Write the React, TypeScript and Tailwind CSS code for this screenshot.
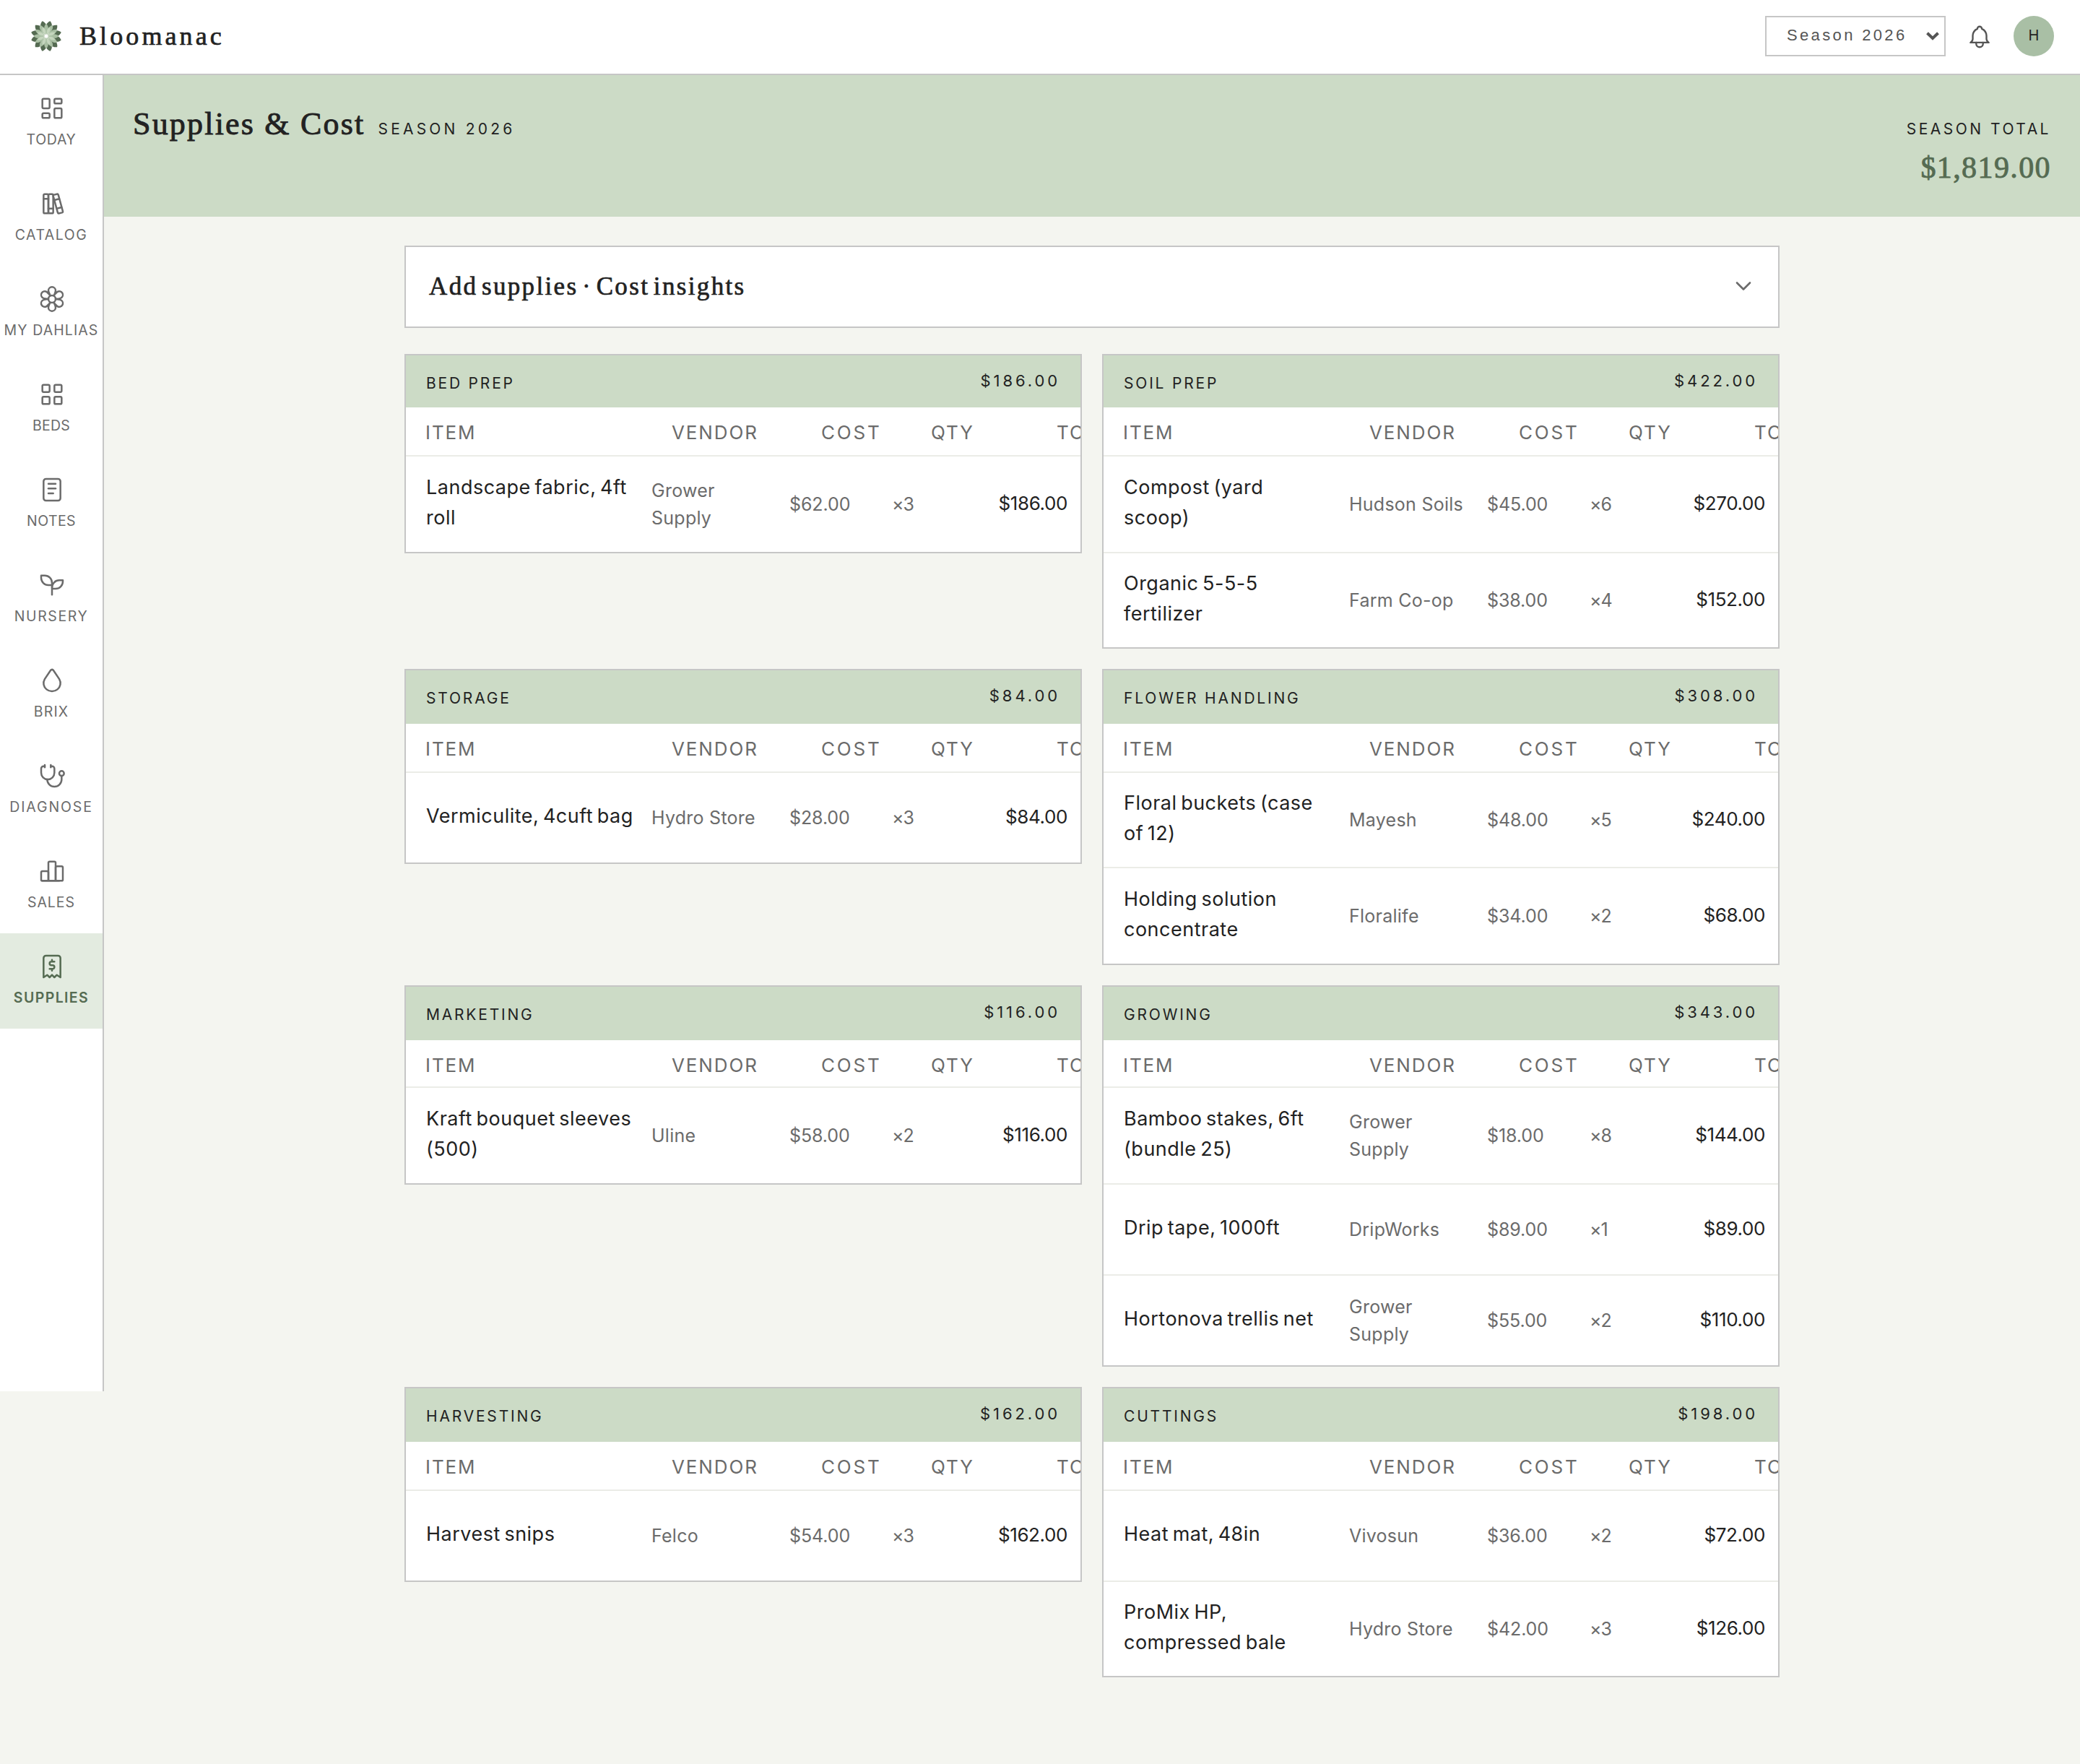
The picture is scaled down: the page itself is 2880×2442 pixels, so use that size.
import {
  TbBell,
  TbBooks,
  TbChartBar,
  TbChevronDown,
  TbDroplet,
  TbFlower,
  TbLayoutDashboard,
  TbLayoutGrid,
  TbNotes,
  TbReceipt2,
  TbSeeding,
  TbStethoscope,
} from 'react-icons/tb'

const nav = [
  { label: 'TODAY', icon: TbLayoutDashboard, spacing: 'tracking-[0.7px]' },
  { label: 'CATALOG', icon: TbBooks, spacing: 'tracking-[1.5px]' },
  { label: 'MY DAHLIAS', icon: TbFlower, spacing: 'tracking-[1.1px]' },
  { label: 'BEDS', icon: TbLayoutGrid, spacing: 'tracking-[0.2px]' },
  { label: 'NOTES', icon: TbNotes, spacing: 'tracking-[0.4px]' },
  { label: 'NURSERY', icon: TbSeeding, spacing: 'tracking-[1.6px]' },
  { label: 'BRIX', icon: TbDroplet, spacing: 'tracking-[1.2px]' },
  { label: 'DIAGNOSE', icon: TbStethoscope, spacing: 'tracking-[1.9px]' },
  { label: 'SALES', icon: TbChartBar, spacing: 'tracking-[1px]' },
  { label: 'SUPPLIES', icon: TbReceipt2, spacing: 'tracking-[1.4px]', active: true },
]

type Item = { name: string; vendor: string; cost: string; qty: string; total: string; h: string }
type Group = { title: string; total: string; head: string; cols: string; items: Item[] }

const groups: Group[] = [
  {
    title: 'BED PREP', total: '$186.00', head: 'h-[72px]', cols: 'h-[68px]',
    items: [
      { name: 'Landscape fabric, 4ft\nroll', vendor: 'Grower\nSupply', cost: '$62.00', qty: '×3', total: '$186.00', h: 'h-[132px]' },
    ],
  },
  {
    title: 'SOIL PREP', total: '$422.00', head: 'h-[72px]', cols: 'h-[68px]',
    items: [
      { name: 'Compost (yard\nscoop)', vendor: 'Hudson Soils', cost: '$45.00', qty: '×6', total: '$270.00', h: 'h-[134px]' },
      { name: 'Organic 5-5-5\nfertilizer', vendor: 'Farm Co-op', cost: '$38.00', qty: '×4', total: '$152.00', h: 'h-[130px]' },
    ],
  },
  {
    title: 'STORAGE', total: '$84.00', head: 'h-[74px]', cols: 'h-[68px]',
    items: [
      { name: 'Vermiculite, 4cuft bag', vendor: 'Hydro Store', cost: '$28.00', qty: '×3', total: '$84.00', h: 'h-[124px]' },
    ],
  },
  {
    title: 'FLOWER HANDLING', total: '$308.00', head: 'h-[74px]', cols: 'h-[68px]',
    items: [
      { name: 'Floral buckets (case\nof 12)', vendor: 'Mayesh', cost: '$48.00', qty: '×5', total: '$240.00', h: 'h-[132px]' },
      { name: 'Holding solution\nconcentrate', vendor: 'Floralife', cost: '$34.00', qty: '×2', total: '$68.00', h: 'h-[132px]' },
    ],
  },
  {
    title: 'MARKETING', total: '$116.00', head: 'h-[74px]', cols: 'h-[66px]',
    items: [
      { name: 'Kraft bouquet sleeves\n(500)', vendor: 'Uline', cost: '$58.00', qty: '×2', total: '$116.00', h: 'h-[132px]' },
    ],
  },
  {
    title: 'GROWING', total: '$343.00', head: 'h-[74px]', cols: 'h-[66px]',
    items: [
      { name: 'Bamboo stakes, 6ft\n(bundle 25)', vendor: 'Grower\nSupply', cost: '$18.00', qty: '×8', total: '$144.00', h: 'h-[134px]' },
      { name: 'Drip tape, 1000ft', vendor: 'DripWorks', cost: '$89.00', qty: '×1', total: '$89.00', h: 'h-[126px]' },
      { name: 'Hortonova trellis net', vendor: 'Grower\nSupply', cost: '$55.00', qty: '×2', total: '$110.00', h: 'h-[124px]' },
    ],
  },
  {
    title: 'HARVESTING', total: '$162.00', head: 'h-[74px]', cols: 'h-[68px]',
    items: [
      { name: 'Harvest snips', vendor: 'Felco', cost: '$54.00', qty: '×3', total: '$162.00', h: 'h-[124px]' },
    ],
  },
  {
    title: 'CUTTINGS', total: '$198.00', head: 'h-[74px]', cols: 'h-[68px]',
    items: [
      { name: 'Heat mat, 48in', vendor: 'Vivosun', cost: '$36.00', qty: '×2', total: '$72.00', h: 'h-[126px]' },
      { name: 'ProMix HP,\ncompressed bale', vendor: 'Hydro Store', cost: '$42.00', qty: '×3', total: '$126.00', h: 'h-[130px]' },
    ],
  },
]

function Logo() {
  return (
    <svg viewBox="-21 -21 42 42" className="h-[42px] w-[42px]">
      {[...Array(12)].map((_, i) => (
        <path key={i} d="M0 -8L-3.8 -16.2C-3.2 -18.4 -1.6 -20.4 0 -21.4C1.6 -20.4 3.2 -18.4 3.8 -16.2Z" fill="#556b52" transform={`rotate(${15 + i * 30})`} />
      ))}
      {[...Array(12)].map((_, i) => (
        <path key={i} d="M0 -3C-3.2 -8 -4.2 -13 0 -17.6C4.2 -13 3.2 -8 0 -3Z" fill="#a9bfa3" transform={`rotate(${i * 30})`} />
      ))}
      {[...Array(8)].map((_, i) => (
        <path key={i} d="M0 -2.5C-3 -6 -3.2 -10 0 -13.6C3.2 -10 3 -6 0 -2.5Z" fill="#c5d6be" stroke="#a9bfa3" strokeWidth="0.5" transform={`rotate(${22.5 + i * 45})`} />
      ))}
      <circle r="3" fill="#fff" stroke="#a9bfa3" strokeWidth="0.6" />
    </svg>
  )
}

function TopBar() {
  return (
    <header className="flex h-[104px] items-center justify-between border-b-2 border-[#c6c6c6] bg-white pr-9 pb-[2px] pl-[43px]">
      <div className="flex items-center gap-[25px]">
        <Logo />
        <span className="font-['Liberation_Serif',serif] text-[36px] leading-[44px] tracking-[4.1px] text-[#222] [-webkit-text-stroke:0.7px_#222]">Bloomanac</span>
      </div>
      <div className="flex items-center gap-7">
        <div className="flex h-14 w-[250px] items-center justify-between border-2 border-[#c6c6c6] pr-[7px] pl-7">
          <span className="pb-[3px] font-['Liberation_Sans',sans-serif] text-[22px] leading-[26px] tracking-[3.35px] text-[#555]">Season 2026</span>
          <svg viewBox="0 0 18 12" className="h-3 w-[18px]" fill="none" stroke="#555" strokeWidth="4">
            <path d="M1.5 1.8L9 9L16.5 1.8" />
          </svg>
        </div>
        <TbBell size={38} strokeWidth={1.5} className="mt-[2px] text-[#555]" />
        <div className="flex h-14 w-14 items-center justify-center rounded-full bg-[#a9bfa5] pb-[3px] text-[20px] text-[#222]">H</div>
      </div>
    </header>
  )
}

function Sidebar() {
  return (
    <nav className="h-[1822px] w-36 shrink-0 border-r-2 border-[#c6c6c6] bg-white">
      {nav.map(({ label, icon: Icon, spacing, active }) => (
        <div
          key={label}
          className={`flex h-[132px] flex-col items-center gap-[11px] pt-[26px] ${active ? 'bg-[#e3ebe0] font-semibold text-[#556b52]' : 'text-[#6b6b6b]'}`}
        >
          <Icon size={40} strokeWidth={1.5} className="ml-[2px]" />
          <span className={`text-[19.5px] leading-6 whitespace-nowrap ${spacing}`}>{label}</span>
        </div>
      ))}
    </nav>
  )
}

function GroupCard({ group }: { group: Group }) {
  return (
    <section className="overflow-hidden border-2 border-[#c6c6c6] bg-white">
      <div className={`flex items-start justify-between bg-[#ccdbc6] pr-7 pl-7 leading-[26px] text-[#222] ${group.head}`}>
        <h3 className="pt-[26px] text-[21px] tracking-[2.8px]">{group.title}</h3>
        <span className="pt-[22px] text-[22px] tracking-[3.9px]">{group.total}</span>
      </div>
      <div className={`grid grid-cols-[341px_207px_152px_174px_100px] items-start border-b-2 border-[#ebece7] pt-[22px] pl-[27px] text-[26px] leading-[26px] tracking-[1.9px] text-[#6b6b6b] ${group.cols}`}>
        <span>ITEM</span>
        <span>VENDOR</span>
        <span className="tracking-[2.8px]">COST</span>
        <span>QTY</span>
        <span>TOTAL</span>
      </div>
      {group.items.map((item) => (
        <div
          key={item.name}
          className={`grid grid-cols-[312px_191px_142px_60px_183px] items-center border-b-2 border-[#ebece7] pl-7 text-[25px] leading-[38px] whitespace-pre-line text-[#6b6b6b] last:border-b-0 ${item.h}`}
        >
          <span className="pb-[5px] text-[27px] leading-[42px] tracking-[0.5px] text-[#222] [word-spacing:-2.5px]">{item.name}</span>
          <span className="pb-px tracking-[0.25px]">{item.vendor}</span>
          <span className="pb-px tracking-[-0.1px]">{item.cost}</span>
          <span className="pb-px tracking-[-1px]">{item.qty}</span>
          <span className="pb-[3px] text-right text-[26px] tracking-[-0.4px] text-[#222]">{item.total}</span>
        </div>
      ))}
    </section>
  )
}

export default function App() {
  return (
    <div className="min-h-[2442px] w-[2880px] bg-[#f4f5f0] font-['Inter',sans-serif]">
      <TopBar />
      <div className="flex items-start">
        <Sidebar />
        <main className="flex-1">
          <div className="flex h-[196px] items-start justify-between bg-[#ccdbc6] px-10 text-[#222]">
            <div className="flex items-baseline gap-[18px] pt-[42px]">
              <h1 className="font-['Liberation_Serif',serif] text-[44px] leading-[52px] tracking-[2.2px] [-webkit-text-stroke:0.9px_#222]">Supplies &amp; Cost</h1>
              <span className="text-[21px] leading-[26px] tracking-[4.2px]">SEASON 2026</span>
            </div>
            <div className="flex flex-col items-end gap-[14px] pt-[62px]">
              <span className="text-[21px] leading-[26px] tracking-[3.5px]">SEASON TOTAL</span>
              <span className="font-['Liberation_Serif',serif] text-[42px] leading-[52px] tracking-[1.4px] text-[#556b52] [-webkit-text-stroke:0.9px_#556b52]">$1,819.00</span>
            </div>
          </div>

          <div className="mx-auto w-[1904px] pt-10">
            <div className="flex h-[114px] items-center justify-between border-2 border-[#c6c6c6] bg-white pr-[30px] pl-8">
              <h2 className="font-['Liberation_Serif',serif] text-[35px] leading-[42px] tracking-[2.35px] text-[#222] [word-spacing:-5.5px] [-webkit-text-stroke:0.7px_#222]">Add supplies · Cost insights</h2>
              <TbChevronDown size={36} strokeWidth={1.75} className="mb-[2px] text-[#6b6b6b]" />
            </div>
            <div className="mt-9 grid grid-cols-2 items-start gap-7">
              {groups.map((g) => <GroupCard key={g.title} group={g} />)}
            </div>
          </div>
        </main>
      </div>
    </div>
  )
}
